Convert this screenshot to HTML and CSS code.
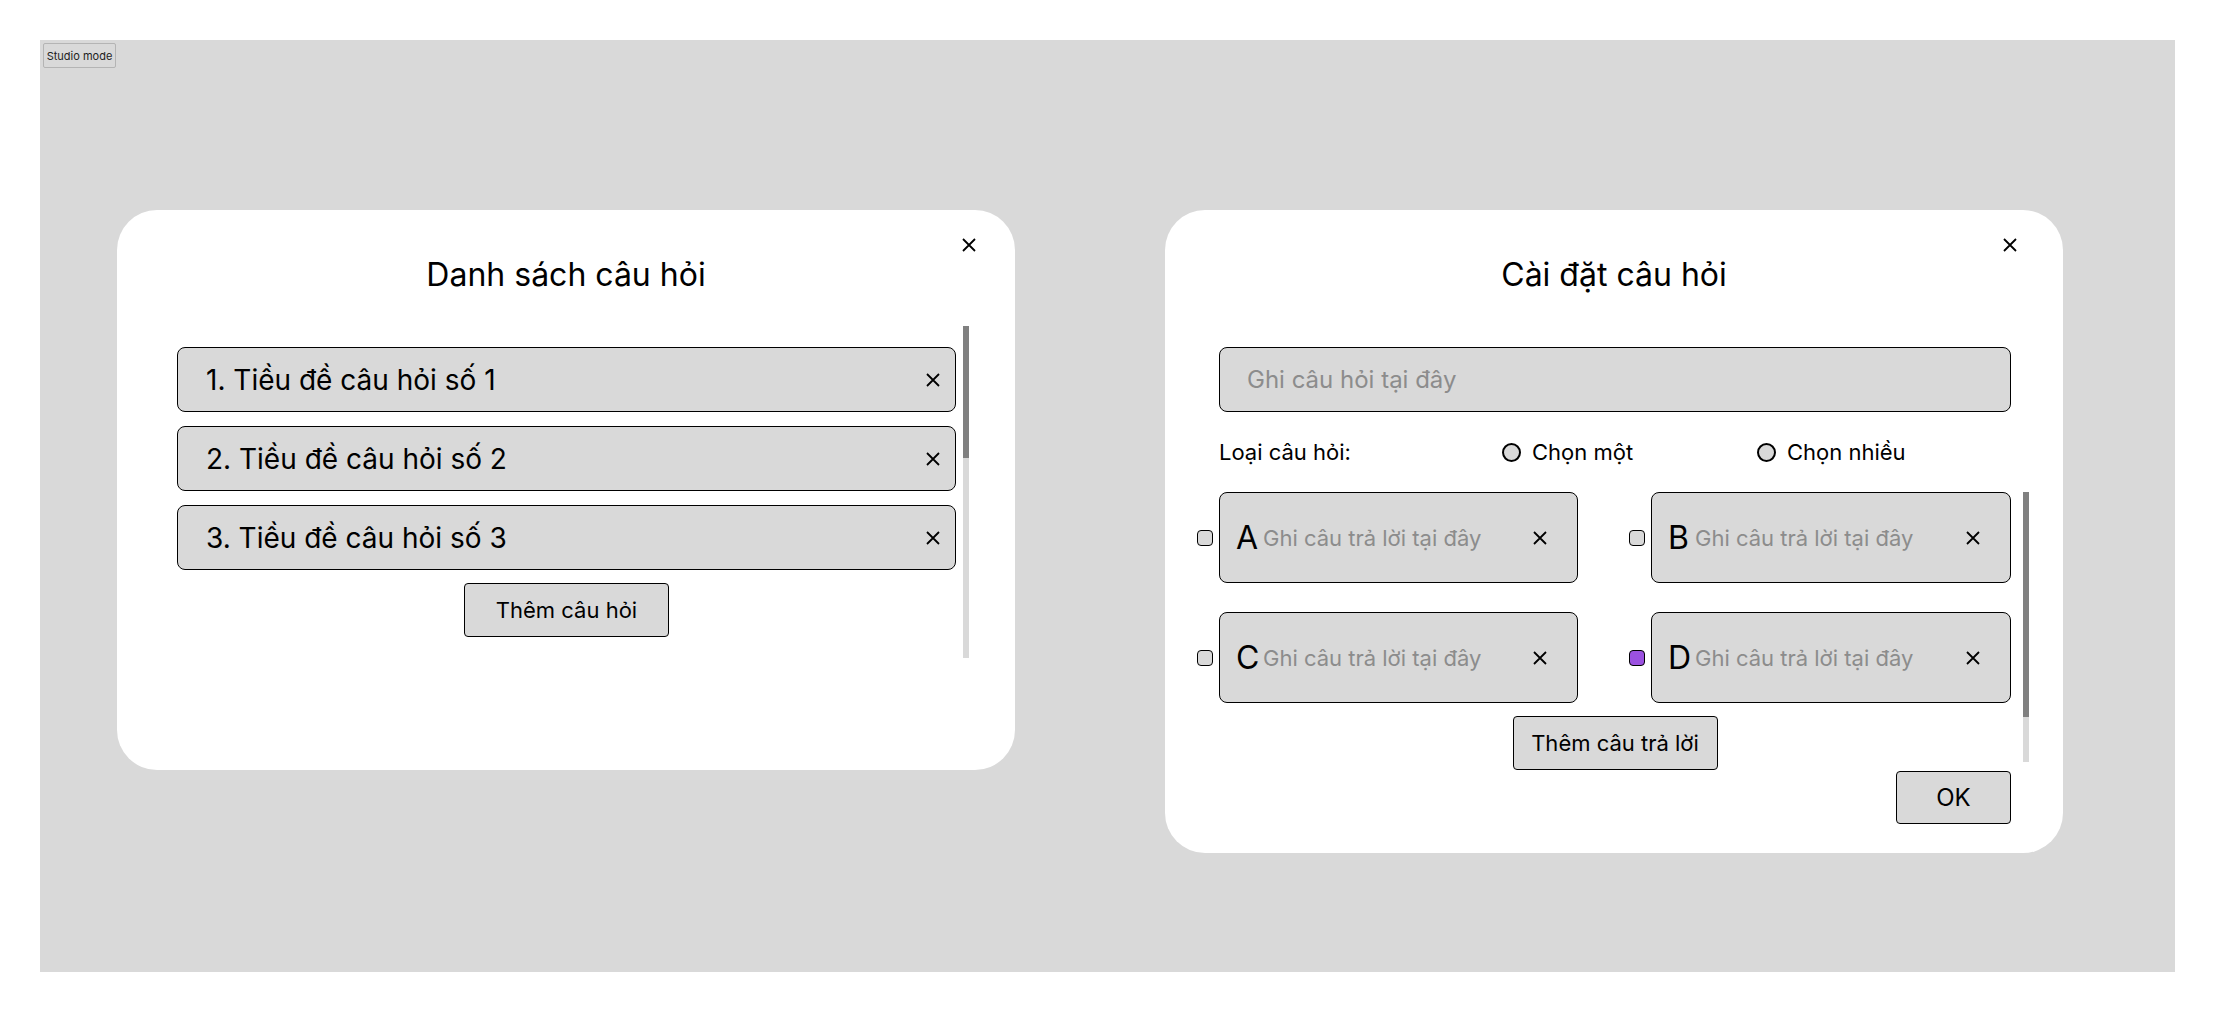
FILE: index.html
```html
<!DOCTYPE html>
<html lang="vi">
<head>
<meta charset="utf-8">
<title>Studio</title>
<link rel="stylesheet" href="styles.css">
</head>
<body>
<div class="canvas">
  <button class="studio-btn">Studio mode</button>
  <div class="cards">
    <section class="card card-list">
      <button class="close-btn close-left" aria-label="Đóng">
        <svg viewBox="0 0 14 14" width="14" height="14"><path d="M1 1L13 13M13 1L1 13" stroke="#000" stroke-width="1.8" fill="none"/></svg>
      </button>
      <h2 class="card-title">Danh sách câu hỏi</h2>
      <div class="list-area">
        <div class="list-content">
          <div class="q-item"><span class="q-text">1. Tiều đề câu hỏi số 1</span><svg class="x-ic" viewBox="0 0 14 14" width="14" height="14"><path d="M1 1L13 13M13 1L1 13" stroke="#000" stroke-width="1.8" fill="none"/></svg></div>
          <div class="q-item"><span class="q-text">2. Tiều đề câu hỏi số 2</span><svg class="x-ic" viewBox="0 0 14 14" width="14" height="14"><path d="M1 1L13 13M13 1L1 13" stroke="#000" stroke-width="1.8" fill="none"/></svg></div>
          <div class="q-item"><span class="q-text">3. Tiều đề câu hỏi số 3</span><svg class="x-ic" viewBox="0 0 14 14" width="14" height="14"><path d="M1 1L13 13M13 1L1 13" stroke="#000" stroke-width="1.8" fill="none"/></svg></div>
          <button class="btn btn-add-q">Thêm câu hỏi</button>
        </div>
        <div class="scrollbar sb-left"><div class="thumb thumb-left"></div></div>
      </div>
    </section>

    <section class="card card-edit">
      <button class="close-btn close-right" aria-label="Đóng">
        <svg viewBox="0 0 14 14" width="14" height="14"><path d="M1 1L13 13M13 1L1 13" stroke="#000" stroke-width="1.8" fill="none"/></svg>
      </button>
      <h2 class="card-title">Cài đặt câu hỏi</h2>
      <div class="q-input"><span class="ph">Ghi câu hỏi tại đây</span></div>
      <div class="type-row">
        <span class="type-label">Loại câu hỏi:</span>
        <span class="radio-opt opt-one"><span class="radio"></span>Chọn một</span>
        <span class="radio-opt"><span class="radio"></span>Chọn nhiều</span>
      </div>
      <div class="answers-area">
        <div class="answers-content">
          <div class="answers-grid">
            <div class="ans">
              <span class="check"></span>
              <div class="ans-box"><span class="ans-letter">A</span><span class="ans-ph">Ghi câu trả lời tại đây</span><svg class="x-ic" viewBox="0 0 14 14" width="14" height="14"><path d="M1 1L13 13M13 1L1 13" stroke="#000" stroke-width="1.8" fill="none"/></svg></div>
            </div>
            <div class="ans">
              <span class="check"></span>
              <div class="ans-box"><span class="ans-letter">B</span><span class="ans-ph">Ghi câu trả lời tại đây</span><svg class="x-ic" viewBox="0 0 14 14" width="14" height="14"><path d="M1 1L13 13M13 1L1 13" stroke="#000" stroke-width="1.8" fill="none"/></svg></div>
            </div>
            <div class="ans">
              <span class="check"></span>
              <div class="ans-box"><span class="ans-letter">C</span><span class="ans-ph">Ghi câu trả lời tại đây</span><svg class="x-ic" viewBox="0 0 14 14" width="14" height="14"><path d="M1 1L13 13M13 1L1 13" stroke="#000" stroke-width="1.8" fill="none"/></svg></div>
            </div>
            <div class="ans">
              <span class="check checked"></span>
              <div class="ans-box"><span class="ans-letter">D</span><span class="ans-ph">Ghi câu trả lời tại đây</span><svg class="x-ic" viewBox="0 0 14 14" width="14" height="14"><path d="M1 1L13 13M13 1L1 13" stroke="#000" stroke-width="1.8" fill="none"/></svg></div>
            </div>
          </div>
          <button class="btn btn-add-a">Thêm câu trả lời</button>
        </div>
        <div class="scrollbar sb-right"><div class="thumb thumb-right"></div></div>
      </div>
      <div class="ok-row"><button class="btn btn-ok">OK</button></div>
    </section>
  </div>
</div>
</body>
</html>
```

FILE: styles.css
```css
* { box-sizing: border-box; }
html, body { margin: 0; padding: 0; background: #ffffff; }
body {
  font-family: Inter, "Noto Sans", "Liberation Sans", sans-serif;
  color: #000;
}
button { font-family: inherit; }

.canvas {
  margin: 40px 0 0 40px;
  width: 2135px;
  height: 932px;
  background: #d9d9d9;
  padding: 3px;
}

.studio-btn {
  display: block;
  height: 25px;
  width: 73px;
  padding: 0;
  font-size: 11px;
  color: #222;
  background: #d9d9d9;
  border: 1px solid #b4b4b4;
  border-radius: 2px;
}

.cards {
  display: flex;
  align-items: flex-start;
  gap: 150px;
  margin-top: 142px;
  padding-left: 74px;
}

.card {
  position: relative;
  width: 898px;
  background: #ffffff;
  border-radius: 40px;
}
.card-list { height: 560px; }
.card-edit { height: 643px; padding-bottom: 29px; }

.close-btn {
  position: absolute;
  top: 28px;
  width: 14px;
  height: 14px;
  padding: 0;
  border: 0;
  background: transparent;
  display: block;
}
.close-btn svg { display: block; }
.close-left { right: 39px; }
.close-right { right: 46px; }

.card-title {
  margin: 0;
  padding-top: 45px;
  height: 116px;
  text-align: center;
  font-weight: 400;
  font-size: 32px;
  line-height: 40px;
}

/* list card */
.list-area {
  display: flex;
  margin-left: 60px;
  gap: 7px;
}
.list-content {
  width: 779px;
  padding-top: 21px;
  display: flex;
  flex-direction: column;
  align-items: center;
  gap: 14px;
}
.q-item {
  width: 100%;
  height: 65px;
  display: flex;
  align-items: center;
  justify-content: space-between;
  background: #d9d9d9;
  border: 1px solid #000;
  border-radius: 8px;
  padding: 0 15px 0 28px;
}
.q-text { font-size: 28px; }
.x-ic { display: block; flex: none; }

.btn {
  background: #d9d9d9;
  border: 1px solid #000;
  border-radius: 4px;
  font-size: 22px;
  color: #000;
  padding: 0;
}
.btn-add-q {
  width: 205px;
  height: 54px;
  margin-top: -1px;
}

.scrollbar {
  width: 6px;
  background: #d9d9d9;
  flex: none;
}
.sb-left { height: 332px; }
.thumb { background: #808080; width: 6px; }
.thumb-left { height: 132px; }

/* edit card */
.q-input {
  margin: 21px 0 0 54px;
  width: 792px;
  height: 65px;
  background: #d9d9d9;
  border: 1px solid #000;
  border-radius: 8px;
  display: flex;
  align-items: center;
  padding-left: 27px;
}
.ph { font-size: 24px; color: #8c8c8c; }

.type-row {
  display: flex;
  align-items: center;
  margin-left: 54px;
  height: 30px;
  margin-top: 25px;
  font-size: 22px;
}
.type-label { width: 283px; }
.radio-opt {
  display: flex;
  align-items: center;
  gap: 11px;
}
.opt-one { width: 255px; }
.radio {
  width: 19px;
  height: 19px;
  border: 2.5px solid #000;
  border-radius: 50%;
  background: #d9d9d9;
  flex: none;
}

.answers-area {
  display: flex;
  margin-top: 25px;
  margin-left: 54px;
  gap: 12px;
}
.answers-content {
  width: 792px;
  display: flex;
  flex-direction: column;
  align-items: center;
}
.answers-grid {
  display: grid;
  grid-template-columns: 359px 360px;
  column-gap: 73px;
  row-gap: 29px;
}
.ans {
  display: flex;
  align-items: center;
}
.check {
  flex: none;
  width: 16px;
  height: 16px;
  margin-left: -22px;
  margin-right: 6px;
  border: 1px solid #000;
  border-radius: 4px;
  background: #d9d9d9;
}
.check.checked { background: #9b51e0; }
.ans-box {
  flex: 1;
  height: 91px;
  display: flex;
  align-items: center;
  background: #d9d9d9;
  border: 1px solid #000;
  border-radius: 8px;
  padding: 0 30px 0 16px;
}
.ans-letter { font-size: 32px; width: 27px; flex: none; }
.ans-ph { font-size: 22px; color: #8c8c8c; flex: 1; }

.btn-add-a {
  width: 205px;
  height: 54px;
  margin-top: 13px;
}

.sb-right { height: 270px; }
.thumb-right { height: 225px; }

.ok-row {
  display: flex;
  justify-content: flex-end;
  margin-right: 52px;
  margin-top: 1px;
}
.btn-ok {
  width: 115px;
  height: 53px;
  font-size: 24px;
}
```
